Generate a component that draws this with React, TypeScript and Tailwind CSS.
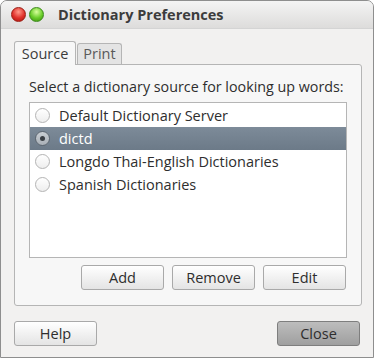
import React, { useState } from 'react';

const FONT = { fontFamily: '"Open Sans", "DejaVu Sans", sans-serif' };

const sources = ['Default Dictionary Server', 'dictd', 'Longdo Thai-English Dictionaries', 'Spanish Dictionaries'];

function Radio({ checked }: { checked: boolean }) {
  return (
    <span className={`flex h-[15px] w-[15px] shrink-0 items-center justify-center rounded-full border ${checked ? 'border-[#5c6670] bg-gradient-to-b from-[#c9ced3] to-[#a9b0b7]' : 'border-[#b4b4b4] bg-gradient-to-b from-[#ffffff] to-[#eeeeee]'}`}>
      {checked && <span className="h-[5px] w-[5px] rounded-full bg-[#3a3f44]" />}
    </span>
  );
}

function Button({ label, primary }: { label: string; primary?: boolean }) {
  return (
    <button
      className={`flex h-[25px] w-[83px] items-center justify-center rounded-[3px] border text-[14.5px] ${primary ? 'border-[#7e7e7e] bg-gradient-to-b from-[#bdbdbd] to-[#9f9f9f] text-[#2e2e2e]' : 'border-[#a9a9a9] bg-gradient-to-b from-[#ffffff] to-[#e4e4e4] text-[#2e2e2e]'}`}
    >
      {label}
    </button>
  );
}

export default function App() {
  const [selected, setSelected] = useState(1);

  return (
    <div className="h-[359px] w-[375px] bg-white" style={FONT}>
      <div className="flex h-[358px] w-[374px] flex-col overflow-hidden rounded-t-[7px] border border-[#8e8e8e] bg-[#f2f1f0]">
        <div className="flex h-[28px] shrink-0 items-center border-b border-[#d4d4d4] bg-gradient-to-b from-[#f4f4f4] to-[#dddcdb] pl-[10px]">
          <span className="h-[15px] w-[15px] rounded-full border border-[#9b1c12] bg-[radial-gradient(circle_at_50%_30%,#ff9a8a,#e0302a_55%,#a8150e)]" />
          <span className="ml-[3px] h-[15px] w-[15px] rounded-full border border-[#3b8a1a] bg-[radial-gradient(circle_at_50%_30%,#d8ff9c,#68cc28_55%,#3f8e12)]" />
          <span className="ml-[14px] text-[14.5px] font-bold text-[#3c3c3c]">Dictionary Preferences</span>
        </div>

        <div className="flex flex-1 flex-col px-[13px] pt-[12px]">
          <div className="flex items-end">
            <div className="relative z-10 -mb-px flex h-[24px] w-[62px] items-center justify-center rounded-t-[3px] border border-b-0 border-[#b5b5b5] bg-[#f7f7f7] text-[14.5px] text-[#3c3c3c]">
              Source
            </div>
            <div className="ml-px flex h-[21px] w-[45px] items-center justify-center rounded-t-[3px] border border-b-0 border-[#b5b5b5] bg-[#e4e4e4] text-[14.5px] text-[#5a5a5a]">
              Print
            </div>
          </div>
          <div className="flex h-[242px] w-[348px] flex-col rounded-b-[3px] rounded-tr-[3px] border border-[#b5b5b5] bg-[#f7f7f7] px-[14px] pt-[12px]">
            <div className="text-[14.3px] leading-[19px] text-[#2e2e2e]">Select a dictionary source for looking up words:</div>
            <div className="mt-[6px] h-[156px] border border-[#b5b5b5] bg-white py-px">
              {sources.map((s, i) => (
                <div
                  key={s}
                  onClick={() => setSelected(i)}
                  className={`flex h-[23px] items-center gap-[9px] pl-[5px] text-[14.5px] ${i === selected ? 'bg-gradient-to-b from-[#7d8b99] to-[#6c7a88] text-white' : 'text-[#2e2e2e]'}`}
                >
                  <Radio checked={i === selected} />
                  <span>{s}</span>
                </div>
              ))}
            </div>
            <div className="mt-[7px] flex justify-end gap-[8px] pr-px">
              <Button label="Add" />
              <Button label="Remove" />
              <Button label="Edit" />
            </div>
          </div>

          <div className="mt-[15px] flex justify-between">
            <Button label="Help" />
            <Button label="Close" primary />
          </div>
        </div>
      </div>
    </div>
  );
}
